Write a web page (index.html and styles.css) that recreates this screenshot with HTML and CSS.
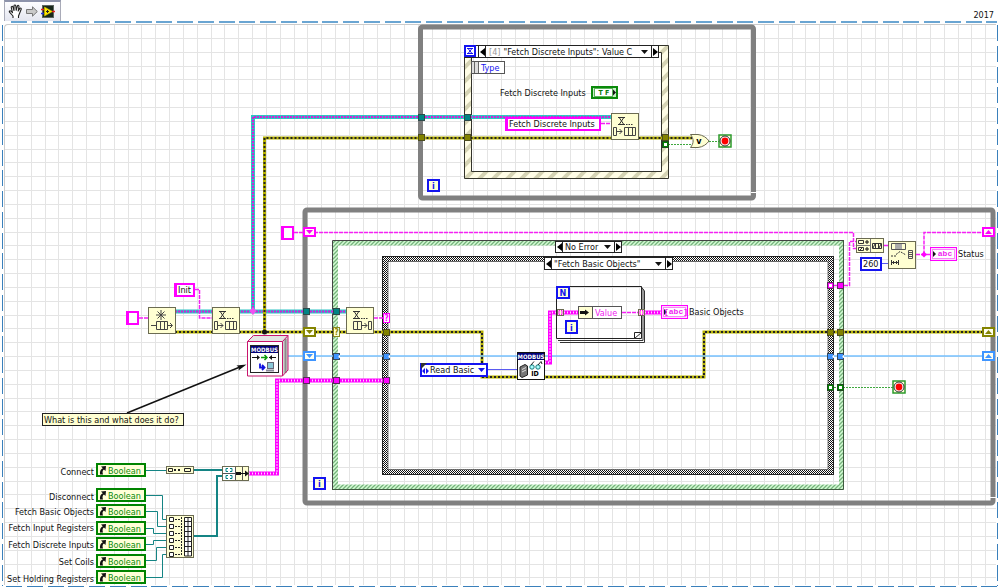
FILE: index.html
```html
<!DOCTYPE html>
<html lang="en">
<head>
<meta charset="utf-8">
<title>Block Diagram</title>
<link rel="stylesheet" href="styles.css">
</head>
<body>
<header class="toolbar" role="toolbar" aria-label="Run">
  <button class="tool" type="button" aria-label="Pan">
    <svg width="15" height="15" viewBox="0 0 15 15"><path d="M5 14V12L1.5 8.2C.8 7 2 6.4 3 7.2L4.5 8.6 3.3 3.6C3 2.2 4.6 2 5 3.2L6 6.5V1.8C6.1.7 7.6.7 7.8 1.8L8.2 6.3 9.4 2C9.9 1 11.2 1.4 11 2.6L10.2 7 11.8 4.4C12.5 3.6 13.6 4.2 13.2 5.2L11.5 9.5 10.5 12V14" fill="#fff" stroke="#222" stroke-width="1.1" stroke-linejoin="round"/></svg>
  </button>
  <button class="tool" type="button" aria-label="Run once">
    <svg width="12" height="11" viewBox="0 0 12 11"><path d="M.5 3.5H6.5V.8L11.3 5.5 6.5 10.2V7.5H.5Z" fill="#c9c9c9" stroke="#777"/></svg>
  </button>
  <button class="tool" type="button" aria-label="VI icon">
    <svg width="14" height="13" viewBox="0 0 14 13"><rect x="1" width="12" height="13" fill="#5c6660"/><rect x="2" y="1" width="10" height="11" fill="#18281c"/><path d="M3.500 2 11.500 6.500 3.500 11Z" fill="#ffe800" stroke="#c8b400" stroke-width=".6"/><path d="M5 6.500h3M6.500 5v3" stroke="#222"/><path d="M0 4.500h3" stroke="#e02020" stroke-width="1.500"/><path d="M0 8.500h3" stroke="#2030e0" stroke-width="1.500"/><path d="M11 6.500h3" stroke="#e02020" stroke-width="1.500"/></svg>
  </button>
</header>
<span class="year">2017</span>

<main class="sheet">
  <svg class="grid" aria-hidden="true">
    <defs>
      <pattern id="squares" x="12" y="13" width="83" height="83" patternUnits="userSpaceOnUse">
        <path d="M.5 0V83M14.5 0V83M28.5 0V83M41.5 0V83M55.5 0V83M69.5 0V83M0 .5H83M0 14.5H83M0 28.5H83M0 41.5H83M0 55.5H83M0 69.5H83" stroke="#e4e4e4"/>
      </pattern>
    </defs>
    <rect width="100%" height="100%" fill="url(#squares)"/>
  </svg>
</main>
<svg class="frame" aria-hidden="true">
  <line class="dash top" x1="9" y1="0" x2="100%" y2="0"/>
  <line class="dash" x1="0" y1="3" x2="0" y2="100%"/>
  <line class="dash" x1="100%" y1="3" x2="100%" y2="100%"/>
  <line class="dash" x1="4" y1="100%" x2="100%" y2="100%"/>
</svg>

<svg class="diagram" role="img" aria-label="Queued message handler block diagram">
  <defs>
    <pattern id="stripe" width="14" height="14" patternUnits="userSpaceOnUse"><rect width="14" height="14" fill="#fffde6"/><path d="M-3 10 10-3M-3 24 24-3M4 17 17 4" stroke="none"/><path d="M-2 16 16-2M-2 2 2-2M12 16 16 12" stroke="#d5d3b4" stroke-width="4"/></pattern>
    <pattern id="greenhatch" width="4" height="4" patternUnits="userSpaceOnUse"><rect width="4" height="4" fill="#d4fbd4"/><path d="M-1 5 5-1M-1 1 1-1M3 5 5 3" stroke="#76b27c" stroke-width="1.3"/></pattern>
    <pattern id="check" width="2" height="4" patternUnits="userSpaceOnUse"><rect width="2" height="4" fill="#fff"/><path d="M0 0h1v1h-1zM1 1h1v1h-1zM0 2h1v1h-1zM1 3h1v1h-1z" fill="#111"/></pattern>

    <g id="nodebox"><rect x=".5" y=".5" width="27" height="26" fill="#ffffd2" stroke="#6b6b52"/></g>
    <g id="timer" fill="none" stroke="#333"><path d="M0 .5H7M0 7.5H7M1.5 1 5.5 7M5.5 1 1.5 7"/><path d="M8 7.5h1.5M10.5 7.5H12M13 7.5h1.5"/></g>
    <g id="cells" fill="none" stroke="#444"><path d="M.5.5H11.5V8.5H.5ZM4.5.5V8.5M8.5.5V8.5"/></g>
    <g id="enqueue">
      <use href="#nodebox"/><use href="#timer" x="7" y="4"/><use href="#cells" x="13" y="14"/>
      <path d="M2.5 14.5H5.5V22.5H2.5ZM6 18.5H11M8.5 16 11 18.5 8.5 21" fill="none" stroke="#444"/>
    </g>
    <g id="dequeue">
      <use href="#nodebox"/><use href="#timer" x="7" y="4"/>
      <path d="M7.5 14.5H15.5V22.5H7.5ZM11.5 14.5V22.5M16 18.5H21M18.5 16 21 18.5 18.5 21M22.5 14.5H25.5V22.5H22.5Z" fill="none" stroke="#444"/>
    </g>
    <g id="obtain">
      <use href="#nodebox"/>
      <path d="M13 3V13M8 8H18M9.5 4.5 16.5 11.5M16.5 4.5 9.5 11.5M3 18.5H8M20 18.5H24M22 16 24.5 18.5 22 21" fill="none" stroke="#444"/>
      <use href="#cells" x="8" y="14"/>
    </g>

    <g id="t-teal"><rect x=".5" y=".5" width="6" height="6" fill="#008484" stroke="#2d4a4a"/></g>
    <g id="t-olive"><rect x=".5" y=".5" width="6" height="6" fill="#828200" stroke="#4c4c20"/></g>
    <g id="t-pink"><rect x=".5" y=".5" width="6" height="6" fill="#f0f" stroke="#5b2a5b"/></g>
    <g id="t-blue"><rect x=".5" y=".5" width="6" height="6" fill="#3f95ff" stroke="#35485c"/><path d="M7 2A1.5 1.5 0 0 0 7 5" fill="#fff"/></g>
    <g id="t-green"><rect x=".5" y=".5" width="6" height="6" fill="#008400" stroke="#1f4a1f"/><rect x="2" y="2" width="3" height="3" fill="#fff"/></g>
    <g id="t-index"><rect x=".5" y=".5" width="6" height="6" fill="#ffffd8" stroke="#6b6b52"/><path d="M3 1.5H2V5.5H3M4 1.5H5V5.5H4" stroke="#f0f" fill="none"/></g>

    <g id="reg-down"><rect x="1" y="1" width="11" height="8" fill="#fffff0" stroke="currentColor" stroke-width="2"/><path d="M3 3H10L6.5 7Z" fill="currentColor"/></g>
    <g id="reg-up"><rect x="1" y="1" width="11" height="8" fill="#fffff0" stroke="currentColor" stroke-width="2"/><path d="M3 7H10L6.5 3Z" fill="currentColor"/></g>

    <g id="stop"><rect x="1" y="1" width="12" height="12" fill="#ffffd8" stroke="#2b9a2b" stroke-width="1.5"/><circle cx="7" cy="7" r="5" fill="#fff" stroke="#333"/><circle cx="7" cy="7" r="3.4" fill="#f00"/></g>

    <g id="bool"><rect x="1" y="1" width="48" height="12" fill="#ffffd8" stroke="#008400" stroke-width="2"/><path d="M4 11.5C3.6 8 4.6 6.500 6.800 5.200L5 3.500 10 3 9.500 8 8 6.500C6.500 7.500 6.200 9 7 11.500Z" fill="#111"/></g>

    <g id="strout"><rect x=".5" y=".5" width="26" height="13" fill="#ffd8ff" stroke="#f0f"/><rect x="2.5" y="2.5" width="22" height="9" fill="#fff" stroke="#f58bf5"/><path d="M3 4 6 7 3 10Z" fill="#111"/></g>
  </defs>

  <!-- upper while loop -->
  <rect class="loop" x="420.5" y="27" width="333" height="171" rx="2"/>
  <path d="M751 192.5H757" stroke="#fff"/>

  <!-- event structure -->
  <path d="M464.5 45.5H668.5V178.5H464.5ZM471.5 52.5V171.5H661.5V52.5Z" fill="url(#stripe)" fill-rule="evenodd" stroke="#33332b"/>

  <!-- lower while loop -->
  <rect class="loop" x="305" y="210" width="688" height="293" rx="2"/>
  <path d="M990 497.5H996" stroke="#fff"/>

  <!-- nested case structures -->
  <rect x="335.5" y="243" width="506" height="244" fill="none" stroke="url(#greenhatch)" stroke-width="5"/>
  <path d="M332.5 489V240.5H844" fill="none" stroke="#444"/>
  <path d="M843.5 240V489.5H332" fill="none" stroke="#3f5a3f"/>
  <rect x="385.5" y="259" width="445" height="213" fill="none" stroke="url(#check)" stroke-width="5"/>
  <rect x="382.5" y="256.5" width="451" height="218" fill="none" stroke="#222"/>
  <rect x="388" y="261.5" width="440" height="208" fill="none" stroke="#555" stroke-width=".8"/>

  <!-- queue reference wires -->
  <g class="queue">
    <path class="body" d="M175 311.5H346M253 313V117H612"/>
    <path class="core" d="M175 311.5H346M253 311V117H612"/>
  </g>
  <!-- error cluster wires -->
  <g class="error">
    <path class="body" d="M175 332H482V377H704V332H983M264.5 332V138H692"/>
    <path class="core" d="M175 332H482V377H704V332H983M264.5 332V138H692"/>
  </g>
  <!-- modbus object wire -->
  <path d="M288 356H983" stroke="#74c0ff" stroke-width="1.5" fill="none"/>
  <!-- control reference array wires -->
  <g class="fat">
    <path class="body" d="M249 473.5H277V380.5H384M545 362.5H550V312.5H578M645 312.5H661"/>
    <path class="core" d="M249 473.5H277V380.5H384M545 362.5H550V312.5H578M645 312.5H661"/>
  </g>
  <!-- string wires -->
  <path class="string" d="M139 318H148M195 289.5H199.5V318H212M601 123.5H612M374 318H384M294 232.5H853.5V248.5H857M834 285.5H849.5V241.5H857M884 245.5H889M916 254.5H930M924 254.5V232.5H983M622 312.5H638"/>
  <path class="flag" d="M668 144.5H692M709 141.5H719M834 387.5H893"/>
  <path d="M488 369.5H518M881 263.5H889" stroke="#5a5af0"/>

  <!-- reference wires -->
  <path class="ref" d="M146 470.5H166M146 495.5H162.5V519.5H167M146 511.5H157.5V526.5H167M146 528.5H153.5V533.5H167M146 544.5H153.5V540.5H167M146 560.5H156.5V547.5H167M146 577.5H162.5V554.5H167"/>
  <path class="ref thick" d="M193 470H223M194 536H217V476H223"/>

  <!-- junctions -->
  <path d="M253 307 256.5 311 253 315 249.5 311Z" fill="#f050f0"/><circle cx="264.5" cy="332" r="2.5" fill="#111"/>
  <path d="M924 251.5 927 254.5 924 257.5 921 254.5Z" fill="#f0f"/>

  <!-- tunnels -->
  <use href="#t-teal" x="418" y="114"/><use href="#t-teal" x="464" y="114"/><use href="#t-teal" x="303" y="308"/><use href="#t-teal" x="333" y="308"/>
  <use href="#t-olive" x="418" y="134"/><use href="#t-olive" x="464" y="134"/><use href="#t-olive" x="662" y="134"/>
  <use href="#t-green" x="662" y="141"/>
  <use href="#t-olive" x="383" y="329"/><use href="#t-blue" x="333" y="353"/><use href="#t-blue" x="383" y="353"/>
  <use href="#t-pink" x="303" y="377"/><use href="#t-pink" x="333" y="377"/><use href="#t-pink" x="383" y="377"/>
  <use href="#t-pink" x="827" y="282"/><rect x="829" y="284" width="3" height="3" fill="#fff"/><use href="#t-pink" x="837" y="282"/>
  <use href="#t-olive" x="827" y="329"/><use href="#t-olive" x="837" y="329"/>
  <use href="#t-blue" x="827" y="353"/><use href="#t-blue" x="837" y="353"/>
  <use href="#t-green" x="827" y="384"/><use href="#t-green" x="837" y="384"/>
  <rect x="333.5" y="327.5" width="6" height="9" fill="#ffffd8" stroke="#8a8a20"/><text class="case olive" x="336.5" y="335">?</text>
  <rect x="383.5" y="313.5" width="6" height="9" fill="#fff0ff" stroke="#f0f"/><text class="case pink" x="386.5" y="321">?</text>

  <!-- shift registers -->
  <g color="#f0f"><use href="#reg-down" x="303" y="227"/><use href="#reg-up" x="982" y="227"/></g>
  <g color="#848400"><use href="#reg-down" x="303" y="327"/><use href="#reg-up" x="982" y="327"/></g>
  <g color="#3f95ff"><use href="#reg-down" x="303" y="351"/><use href="#reg-up" x="982" y="351"/></g>

  <!-- queue functions -->
  <use href="#obtain" x="148" y="307"/><use href="#enqueue" x="212" y="307"/><use href="#dequeue" x="346" y="307"/><use href="#enqueue" x="611" y="113"/>

  <!-- iteration terminals -->
  <g class="terminal">
    <rect x="428" y="180" width="11" height="11"/><text x="433.5" y="189">i</text>
    <rect x="314" y="478" width="11" height="11"/><text x="319.5" y="487">i</text>
  </g>

  <!-- event data node, boolean terminal -->
  <rect x="471.5" y="61.5" width="33" height="12" fill="#fff" stroke="#555"/><path d="M472 62H478V73H472Z" fill="#ddd"/><path d="M474.5 62V73M478.5 62V73" stroke="#666"/>
  <text class="label blue" x="481" y="71">Type</text>
  <text class="label" x="500" y="96">Fetch Discrete Inputs</text>
  <rect x="592" y="87" width="25" height="11" fill="#c8ecc8" stroke="#0a8a0a" stroke-width="2"/><rect x="594.5" y="88.5" width="18" height="8" fill="#fff" stroke="#5ab45a"/><text class="tf" x="604" y="95">T F</text><path d="M613 89.5 616 92.5 613 95.5Z" fill="#111"/>

  <!-- or gate and stop terminals -->
  <path d="M690.5 134.5H698C703 135 707 138 709 141 707 144 703 147 698 147.5H690.5C694 143 694 139 690.5 134.5Z" fill="#ffffd2" stroke="#6b6b52"/><text class="gate" x="699" y="144">v</text>
  <use href="#stop" x="718" y="134"/><use href="#stop" x="892" y="380"/>

  <!-- object constant cube -->
  <path d="M247.5 341.5 253.5 335.5H288L282.5 341.5Z" fill="#e4e4e4"/><path d="M282.5 341.5 288 335.5V370L282.5 376Z" fill="#cfcfcf"/><rect x="247.5" y="341.5" width="35" height="34.5" fill="#fff"/>
  <path d="M285.5 339V373" stroke="#8c8c8c" stroke-width="2"/>
  <path d="M247.5 341.5H282.5V376H247.5ZM247.5 341.5 253.5 335.5H288V370L282.5 376M282.5 341.5 288 335.5" fill="none" stroke="#c8146c"/>
  <rect x="250.5" y="345.5" width="28" height="27" fill="#fff" stroke="#222"/><rect x="251" y="346" width="27" height="7" fill="#000078"/><text class="plate" x="264.5" y="352">MODBUS</text>
  <path d="M252 357.5H259M269 357.5H276" stroke="#111"/><path d="M257 355 260 357.5 257 360ZM272 355 269 357.5 272 360Z" fill="#111"/><path d="M261 357.5H267M264.5 355 267 357.5 264.5 360" stroke="#0a9a0a" stroke-width="1.5" fill="none"/>
  <path d="M260 363.5V367.5H264M262 365 264.5 367.5 262 370" stroke="#1010e0" stroke-width="1.8" fill="none"/><rect x="267.5" y="362.5" width="6" height="6" fill="#8ac8d8" stroke="#667"/><path d="M266 370.5H274" stroke="#889" stroke-width="2"/>

  <!-- comment and pointer -->
  <path d="M127 413 240 367" stroke="#111" stroke-width="1.5"/><path d="M246.5 364.5 236.500 365.500 239 367.500 238.500 370.500Z" fill="#111"/>
  <rect x="42.5" y="413.5" width="141" height="12" fill="#ffffd2" stroke="#222"/><text class="label" x="44" y="423">What is this and what does it do?</text>

  <!-- control references -->
  <g class="label right">
    <text x="94" y="475">Connect</text><text x="94" y="500">Disconnect</text><text x="94" y="515">Fetch Basic Objects</text><text x="94" y="531">Fetch Input Registers</text><text x="94" y="548">Fetch Discrete Inputs</text><text x="94" y="565">Set Coils</text><text x="94" y="582">Set Holding Registers</text>
  </g>
  <use href="#bool" x="96" y="463"/><use href="#bool" x="96" y="488"/><use href="#bool" x="96" y="504"/><use href="#bool" x="96" y="521"/><use href="#bool" x="96" y="537"/><use href="#bool" x="96" y="554"/><use href="#bool" x="96" y="570"/>
  <g class="label green">
    <text x="108" y="474">Boolean</text><text x="108" y="499">Boolean</text><text x="108" y="515">Boolean</text><text x="108" y="532">Boolean</text><text x="108" y="548">Boolean</text><text x="108" y="565">Boolean</text><text x="108" y="581">Boolean</text>
  </g>

  <!-- build array functions -->
  <rect x="166.5" y="466.5" width="27" height="7" fill="#ffffd2" stroke="#6b6b52"/><path d="M168.5 468.5H172.5V471.5H168.5ZM184.5 468.5H190.5V471.5H184.5Z" fill="none" stroke="#222"/><path d="M174 470H176M178 470H180" stroke="#222" stroke-width="2"/>
  <rect x="166.5" y="515.5" width="27" height="42" fill="#ffffd2" stroke="#6b6b52"/>
  <path d="M169.5 517.5h4v4h-4zM169.5 524.5h4v4h-4zM169.5 531.5h4v4h-4zM169.5 538.5h4v4h-4zM169.5 545.5h4v4h-4zM169.5 552.5h4v4h-4z" fill="#fff" stroke="#222"/>
  <path d="M175 519.5H180M175 526.5H180M175 533.5H180M175 540.5H180M175 547.5H180M175 554.5H180" stroke="#222" stroke-dasharray="2 1"/>
  <path d="M181.5 517V556" stroke="#222" stroke-dasharray="2 1"/><path d="M184.5 517.5H191.5V556H184.5ZM188 517V556M184 521.5H192M184 526.5H192M184 531.5H192M184 536.5H192M184 541.5H192M184 546.5H192M184 551.5H192" fill="#fff" stroke="#222"/>
  <rect x="222.5" y="466.5" width="26" height="14" fill="#ffffd2" stroke="#6b6b52"/><path d="M223 467H235V480H223Z" fill="#fff"/><path d="M222.5 473.5H236M235.5 467V480M242.5 467V480" stroke="#555"/><path d="M228 468.5H226V471.5H228M230 468.5H232V471.5H230M228 475.5H226V478.5H228M230 475.5H232V478.5H230" fill="none" stroke="#008484"/><path d="M236 472H241V475H236ZM241 473H245V470.5L249 473.5 245 476.5V474H241Z" fill="#111"/>

  <!-- modbus read node -->
  <rect x="517.5" y="352.5" width="27" height="27" fill="#fff" stroke="#111"/><rect x="518" y="353" width="26" height="7" fill="#000078"/><text class="plate" x="531" y="359">MODBUS</text>
  <path d="M520 367 525 364.5 527.5 366V375L522 377.5 520 376Z" fill="#777" stroke="#222"/><path d="M522 369.5 526 367.5M522 372 526 370" stroke="#ddd"/><circle cx="532" cy="367" r="2.2" fill="#aff" stroke="#167878"/><circle cx="538" cy="367" r="2.2" fill="#aff" stroke="#167878"/><path d="M531 365 534 361.5M538 365 541 361.5 542 364" stroke="#222" fill="none"/><text class="tiny" x="535" y="376">ID</text>

  <!-- for loop -->
  <path d="M644.5 291V342.5H560M643 289V340.5H558" fill="none" stroke="#333"/><path d="M641 286.5 644.5 291" stroke="#333"/><path d="M556.5 286.5H641.5V338.5H556.5Z" fill="none" stroke="#222"/><path d="M634.5 338.5V332.500H641.5Z" fill="#fff" stroke="#222"/>
  <use href="#t-index" x="557" y="309"/><use href="#t-index" x="638" y="309"/>
  <rect x="578.5" y="306.5" width="43" height="12" fill="#fff" stroke="#555"/><path d="M579 307H592V318H579Z" fill="#ffffd2"/><path d="M592.5 306V319" stroke="#555"/><path d="M580 311H585V309.5L589 312.5 585 315.5V314H580Z" fill="#111"/><text class="label pinktext" x="595" y="316">Value</text>
  <g class="terminal"><rect x="557" y="287" width="12" height="11"/><text x="563" y="296">N</text><rect x="566" y="321" width="11" height="12"/><text x="571.5" y="331">i</text></g>

  <!-- string indicators -->
  <use href="#strout" x="661" y="305"/><text class="abc" x="676" y="314">[abc]</text><text class="label" x="689" y="315">Basic Objects</text>
  <use href="#strout" x="930" y="247"/><text class="abc" x="945" y="256">abc</text><text class="label" x="958" y="257">Status</text>

  <!-- concatenate and search functions -->
  <rect x="856.5" y="238.5" width="27" height="14" fill="#ffffd2" stroke="#6b6b52"/><path d="M870.5 239V252M857 245.5H870" stroke="#777"/><path d="M858.5 240.5H863.5V243.5H858.5ZM858.5 247.5H863.5V250.5H858.5ZM872.5 243.5H881.5V248.5H872.5ZM875.5 243V248M878.5 243V248M859 251 863 247M873 248 875 244M879 248 881 244" fill="none" stroke="#333"/><path d="M865 242H869M867 240V244M865 249H869M867 247V251" stroke="#111"/>
  <rect x="888.5" y="241.5" width="27" height="27" fill="#ffffd2" stroke="#6b6b52"/><path d="M891.5 243.5H905.5V249.5H891.5ZM908.5 250.5H912.5V258.5H908.5ZM908 252.5H913M908 254.5H913M908 256.5H913" fill="none" stroke="#555"/><rect x="895" y="244" width="7" height="5" fill="#aaa"/><path d="M891 256H896M896 254.5 900 251.5 906 255" stroke="#333" fill="none" stroke-dasharray="2 1"/><path d="M891.5 260V265M898.5 260V265M892 262.5H898M893.500 261V264M896.500 261V264" stroke="#333"/>
</svg>

<section class="controls" aria-label="Diagram constants and selectors">
  <div class="selector event-case">
    <svg class="hourglass" width="12" height="12" viewBox="0 0 12 12" aria-hidden="true"><rect x="1" y="1" width="10" height="10" fill="#fff" stroke="#1414f0" stroke-width="2"/><path d="M3 3.5H9M3 8.5H9M4 3.5 8 8.5M8 3.5 4 8.5" stroke="#1414f0" fill="none"/></svg>
    <span class="link"></span>
    <button class="step" type="button" aria-label="Previous event"><svg width="5" height="8"><path d="M5 0V8L0 4Z"/></svg></button>
    <span class="prefix">[4]</span>
    <select aria-label="Event case"><option>"Fetch Discrete Inputs": Value C</option></select>
    <svg class="caret" width="7" height="4" aria-hidden="true"><path d="M0 0H7L3.5 4Z"/></svg>
    <button class="step" type="button" aria-label="Next event"><svg width="5" height="8"><path d="M0 0V8L5 4Z"/></svg></button>
  </div>
  <div class="selector error-case">
    <button class="step" type="button" aria-label="Previous case"><svg width="5" height="8"><path d="M5 0V8L0 4Z"/></svg></button>
    <select aria-label="Error case"><option>No Error</option></select>
    <svg class="caret" width="7" height="4" aria-hidden="true"><path d="M0 0H7L3.5 4Z"/></svg>
    <button class="step" type="button" aria-label="Next case"><svg width="5" height="8"><path d="M0 0V8L5 4Z"/></svg></button>
  </div>
  <div class="selector message-case">
    <button class="step" type="button" aria-label="Previous message"><svg width="5" height="8"><path d="M5 0V8L0 4Z"/></svg></button>
    <select aria-label="Message case"><option>"Fetch Basic Objects"</option></select>
    <svg class="caret" width="7" height="4" aria-hidden="true"><path d="M0 0H7L3.5 4Z"/></svg>
    <button class="step" type="button" aria-label="Next message"><svg width="5" height="8"><path d="M0 0V8L5 4Z"/></svg></button>
  </div>
  <div class="ring">
    <svg class="corner" width="9" height="12" aria-hidden="true"><path d="M0 0H6L0 6Z" fill="#333"/><path d="M4 5V11L1 8ZM5 5V11L8 8Z" fill="#1414f0"/></svg>
    <select aria-label="Method"><option>Read Basic</option></select>
    <svg class="caret blue" width="7" height="4" aria-hidden="true"><path d="M0 0H7L3.5 4Z"/></svg>
  </div>
  <input class="constant message" aria-label="Message" value="Fetch Discrete Inputs">
  <input class="constant init" aria-label="Initial message" value="Init">
  <input class="constant queue-name" aria-label="Queue name" value="">
  <input class="constant status-start" aria-label="Initial status" value="">
  <input class="constant number" aria-label="Length" value="260">
</section>
</body>
</html>
```
FILE: styles.css
```css
* { box-sizing: border-box; }

body {
  margin: 0;
  min-height: 100vh;
  position: relative;
  overflow: hidden;
  background: #fff;
  color: #111;
  font-family: "DejaVu Sans Condensed", "DejaVu Sans", sans-serif;
  font-size: 9px;
}

button, select, input { font: inherit; color: inherit; margin: 0; padding: 0; border: 0; border-radius: 0; background: none; }
select { appearance: none; }

.toolbar {
  display: flex;
  align-items: center;
  gap: 3px;
  width: 57px;
  height: 21px;
  margin-left: 4px;
  padding: 0 3px;
  background: linear-gradient(#fdfdff, #e4e6f0);
  border: 1px solid #a9abb8;
  border-top: 2px solid #8d93ab;
  border-bottom: 0;
}
.tool { display: flex; }

.year { position: absolute; top: 10px; right: 5px; }

.sheet { position: absolute; inset: 24px 3px 3px 4px; border: 1px solid #ccc; border-width: 1px 0 0 1px; border-top-left-radius: 4px; overflow: hidden; }
.grid { display: block; width: 100%; height: 100%; }

.frame { position: absolute; top: 22px; left: 2px; width: calc(100% - 4px); height: calc(100% - 24px); overflow: visible; }
.dash { stroke: #3a80bb; stroke-width: 1; stroke-dasharray: 16 5 16 5 16 4 16 5; shape-rendering: crispEdges; }
.dash.top { stroke: #6aa5d2; stroke-width: 2; }

.diagram { position: absolute; top: 0; left: 0; width: 100%; height: 100%; }
.controls { position: absolute; top: 0; left: 0; }

.loop { fill: none; stroke: #808080; stroke-width: 5; }

.queue path, .error path, .fat path { fill: none; }
.queue .body { stroke: #2ec4c4; stroke-width: 4; }
.queue .core { stroke: #d020d8; stroke-width: 2; stroke-dasharray: 2 1; }
.error .body { stroke: #b8b400; stroke-width: 3; }
.error .core { stroke: #222; stroke-width: 2; stroke-dasharray: 2 2; }
.fat .body { stroke: #f0f; stroke-width: 4; }
.fat .core { stroke: #ffd8ff; stroke-width: 2; stroke-dasharray: 1 2; }
.string { fill: none; stroke: #f520f5; stroke-width: 1.5; stroke-dasharray: 4 1; }
.flag { fill: none; stroke: #3fa83f; stroke-dasharray: 2 1; }
.ref { fill: none; stroke: #148484; }
.ref.thick { stroke-width: 2; }

.terminal rect { fill: #ffffd8; stroke: #1414f0; stroke-width: 2; }
.terminal text { fill: #1414f0; font-size: 9px; font-weight: bold; text-anchor: middle; }

.label { fill: #111; }
.right { text-anchor: end; }
.green { fill: #0a8a0a; }
.blue { fill: #1414f0; }
.pinktext { fill: #f020f0; }
.case { font-size: 8px; font-weight: bold; text-anchor: middle; }
.olive { fill: #848400; }
.pink { fill: #f0f; }
.tf, .gate, .plate, .tiny, .abc { text-anchor: middle; font-weight: bold; }
.tf { fill: #0a7a0a; font-size: 7px; }
.gate { font-size: 9px; }
.plate { fill: #fff; font-size: 6px; }
.tiny { font-size: 7px; }
.abc { fill: #f020f0; font-family: "Liberation Mono", monospace; font-size: 8px; }

.selector { position: absolute; display: flex; height: 12px; background: #fff; border: 1px solid #222; }
.selector select { flex: 1; min-width: 0; line-height: 10px; padding-left: 2px; }
.step { width: 7px; flex: none; display: flex; align-items: center; justify-content: center; }
.step:first-of-type { border-right: 1px solid #222; }
.step:last-of-type { border-left: 1px solid #222; }
.caret { flex: none; align-self: center; margin-right: 3px; fill: #111; }
.prefix { align-self: center; color: #999; padding: 0 1px 0 3px; }
.event-case { left: 464px; top: 45px; width: 195px; height: 13px; border-left: 0; }
.hourglass { flex: none; margin-top: -1px; }
.link { flex: none; width: 3px; background: #fff; border-right: 1px solid #222; }
.error-case { left: 555px; top: 241px; width: 67px; }
.message-case { left: 544px; top: 257px; width: 129px; height: 13px; }

.ring { position: absolute; left: 420px; top: 363px; width: 68px; height: 14px; display: flex; background: #fff; border: 2px solid #1414f0; }
.ring select { flex: 1; min-width: 0; line-height: 10px; }
.corner { flex: none; margin: -2px 0 0 -1px; }
.caret.blue { margin-right: 1px; fill: #1414f0; }

.constant { position: absolute; height: 14px; background: #fff; border: solid #f0f; border-width: 2px 2px 2px 3px; padding-left: 1px; }
.message { left: 505px; top: 117px; width: 96px; }
.init { left: 174px; top: 283px; width: 21px; }
.queue-name { left: 126px; top: 311px; width: 13px; }
.status-start { left: 281px; top: 226px; width: 13px; }
.number { left: 860px; top: 257px; width: 22px; border: 2px solid #1414f0; }
```
